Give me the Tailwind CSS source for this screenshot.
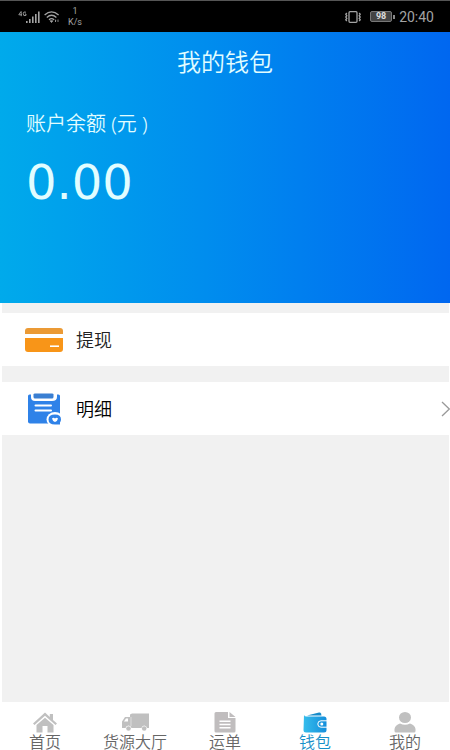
<!DOCTYPE html>
<html lang="zh-CN">
<head>
<meta charset="utf-8">
<meta name="viewport" content="width=device-width, initial-scale=1">
<title>我的钱包</title>
<script src="https://cdn.jsdelivr.net/npm/@tailwindcss/browser@4"></script>
</head>
<body class="flex min-h-screen flex-col bg-white font-['Noto_Sans','Noto_Sans_CJK_SC',sans-serif]">
  <div class="flex h-8 items-center justify-between border-t border-[#555] bg-black pr-4 pl-[18px] font-['Roboto',sans-serif] text-[#a3a3a3]">
    <div class="flex items-center gap-1">
      <svg class="h-3 w-[22px]" viewBox="0 0 22 12" fill="currentColor" aria-hidden="true">
        <path d="M3 0.5L0.8 3.8H4M3.2 0.5V5.2M8 1.2Q5.2 0 5.2 2.8Q5.2 5.6 8 4.4V3H6.8" fill="none" stroke="currentColor" stroke-width=".9"/>
        <path d="M8 10h1.6v2H8zM11 8h1.6v4H11zM14 5.500h1.600v6.500H14zM17 3h1.600v9H17zM20 .5h1.600V12H20z"/>
      </svg>
      <svg class="h-3 w-4" viewBox="0 0 16 12" fill="none" stroke="currentColor" stroke-width="1.300" aria-hidden="true">
        <path d="M.6 4Q7.500-2.300 14.600 4M2.800 6.400Q7.600 2.200 12.400 6.400M5 8.700Q7.600 6.500 10 8.700"/>
        <path d="M6.200 9.800h2.600L7.500 11.500zM11 8.500l1 1.500-1 1M14 8.500v2.500" fill="currentColor" stroke-width=".8"/>
      </svg>
      <div class="flex flex-col items-center pl-1 text-[9px] leading-[11px]"><span>1</span><span>K/s</span></div>
    </div>
    <div class="flex items-center gap-1">
      <svg class="h-3 w-[18px]" viewBox="0 0 18 12" fill="none" stroke="currentColor" stroke-width="1.300" aria-hidden="true">
        <rect x="5" y=".7" width="8" height="10.600" rx="1"/>
        <path d="M2.800 2l-1 1.300 1 1.400-1 1.300 1 1.400-1 1.300 1 1.300M15.200 2l1 1.300-1 1.400 1 1.300-1 1.400 1 1.300-1 1.300"/>
      </svg>
      <div class="flex items-center gap-px pl-1">
        <span class="flex h-[11px] w-[22px] items-center justify-center rounded-xs border border-[#777] bg-[#444] text-[9px] leading-none font-bold text-[#ddd]">98</span>
        <span class="h-1 w-0.5 bg-[#888]"></span>
      </div>
      <span class="text-sm leading-4">20:40</span>
    </div>
  </div>

  <header class="flex h-[271px] flex-col bg-linear-to-r from-[#00aaeb] to-[#0067f0] text-[#e2fdff]">
    <h1 class="pt-3 text-center text-2xl leading-9 font-[350]">我的钱包</h1>
    <section class="px-[26px] pt-7">
      <h2 class="text-xl leading-8 font-[350]">账户余额 (元 )</h2>
      <p class="pt-3.5 font-['DejaVu_Sans',sans-serif] text-5xl leading-[56px]">0.00</p>
    </section>
  </header>

  <main class="mr-px ml-0.5 flex grow flex-col gap-4 bg-[#f1f1f1] pt-[10px]">
    <button type="button" class="-mr-px -ml-0.5 flex h-[53px] items-center bg-white pl-[25px] text-lg font-[350] text-[#222]">
      <svg class="h-6 w-[38px]" viewBox="0 0 38 24" aria-hidden="true">
        <path d="M0 6V3Q0 0 3 0H35Q38 0 38 3V6z" fill="#eb9a35"/>
        <path d="M0 10H38V21Q38 24 35 24H3Q0 24 0 21z" fill="#f89518"/>
        <path d="M25 18.200h9" stroke="#fff" stroke-width="1.600"/>
      </svg>
      <span class="pl-[13px]">提现</span>
    </button>
    <button type="button" class="-mr-px -ml-0.5 flex h-[53px] items-center bg-white pl-[27px] text-lg font-[350] text-black">
      <svg class="h-8 w-9" viewBox="0 0 36 32" aria-hidden="true">
        <path d="M2.500 1.500H31.500Q33 1.500 33 3V28Q33 30.500 31 30.500H3Q1 30.500 1 28.500V3Q1 1.500 2.500 1.500z" fill="#2f82e8"/>
        <path d="M4 0V4Q4 8 8 8H25Q30 8 30 4V0z" fill="#fff"/>
        <path d="M6.500 1.500Q6.500 .5 8 .5H25Q26.500 .5 26.500 1.500V4Q26.500 5.500 25 5.500H8Q6.500 5.500 6.500 4z" fill="#3a7fd2"/>
        <path d="M8.500 12.500H24M8.500 17.500H24" stroke="#fff" stroke-width="2" stroke-linecap="round"/>
        <ellipse cx="28" cy="26.500" rx="8.500" ry="7.500" fill="#fff"/>
        <path d="M28 21.500Q34 21.500 34 26.500Q34 28 33 29.500V31.500H28Q21.500 31.500 21.500 26.500T28 21.500z" fill="#2f82e8"/>
        <path d="M25 25.500Q26.500 24 28 25.500Q29.500 24 31 25.500Q30.500 28.200 28 29Q25.500 28.200 25 25.500z" fill="#fff"/>
      </svg>
      <span class="grow pl-[13px] text-left">明细</span>
      <svg class="h-4 w-[9px]" viewBox="0 0 9 16" fill="none" stroke="#999" stroke-width="1.300" aria-hidden="true"><path d="M1 1L8.300 8L1 15"/></svg>
    </button>
  </main>

  <nav class="grid h-12 grid-cols-5 bg-white text-base leading-4 font-[350] text-[#666]">
    <a href="#home" class="flex flex-col items-center gap-px pt-[9px]">
      <svg class="h-[22px] w-6" viewBox="0 0 24 22" fill="#c0c0c0" aria-hidden="true">
        <path d="M12 1.500L16.800 6V3H20V9L24 12.500 22.500 14 12 4.800 1.500 14 0 12.500z"/>
        <path d="M12 6.800L20.500 14V21.500H14.500V15H9.500V21.500H3.500V14z"/>
      </svg>
      <span>首页</span>
    </a>
    <a href="#hall" class="flex flex-col items-center gap-px pt-[9px]">
      <svg class="h-[22px] w-[28px]" viewBox="0 0 28 22" aria-hidden="true">
        <path d="M11 2.500H28V17H26Q25.500 14.500 23.200 14.500T20.500 17H10.500Q10 14.500 7.500 14.500T4.500 17H1V10.500L4 6H9V3.500z" fill="#c0c0c0"/>
        <path d="M7 7.500H5L3 10.500H7z" fill="#fff"/>
        <path d="M10 6V15" stroke="#e5e5e5" stroke-width=".8"/>
        <circle cx="7.500" cy="17.500" r="2.300" fill="#c0c0c0"/><circle cx="23.200" cy="17.500" r="2.300" fill="#c0c0c0"/>
      </svg>
      <span>货源大厅</span>
    </a>
    <a href="#waybill" class="flex flex-col items-center gap-px pt-[9px]">
      <svg class="h-[22px] w-[22px]" viewBox="0 0 22 22" aria-hidden="true">
        <path d="M2 1H14V7H21.500V20Q21.500 21.500 20 21.500H2Q.5 21.500 .5 20V2.500Q.5 1 2 1zM15.500 1L21.500 6H15.500z" fill="#c0bdbe"/>
        <path d="M5.500 10.200H16.500M5.500 13.500H16.500M5.500 16.800H16.500" stroke="#fff" stroke-width="1.400"/>
      </svg>
      <span>运单</span>
    </a>
    <a href="#wallet" aria-current="page" class="flex flex-col items-center gap-px pt-[9px] text-[#168fc9]">
      <svg class="h-[22px] w-6" viewBox="0 0 24 22" aria-hidden="true">
        <defs><linearGradient id="w"><stop stop-color="#35bdec"/><stop offset="1" stop-color="#148edb"/></linearGradient></defs>
        <path d="M4 4.500L16 1.500Q17.500 1.200 18 2.500L18.500 4.500z" fill="#168bc9"/>
        <path d="M1 4Q1.500 5.500 3.500 5.500H21Q23.500 5.500 23.500 8V19Q23.500 21.500 21 21.500H3Q.5 21.500 .5 19z" fill="url(#w)"/>
        <path d="M24 9.800H18Q14.800 9.800 14.800 13T18 16.200H24" fill="none" stroke="#fff" stroke-width="1"/>
        <circle cx="18.800" cy="13" r="1.500" fill="#fff"/>
      </svg>
      <span>钱包</span>
    </a>
    <a href="#mine" class="flex flex-col items-center gap-px pt-[9px]">
      <svg class="h-[22px] w-[22px]" viewBox="0 0 22 22" fill="#c0c0c0" aria-hidden="true">
        <ellipse cx="11" cy="6.500" rx="6" ry="5.500"/>
        <path d="M.5 20V18Q1 14 6 12.500Q11 15 16 12.500Q21 14 21.500 18V20Q21.500 21.500 20 21.500H2Q.5 21.500 .5 20z"/>
      </svg>
      <span>我的</span>
    </a>
  </nav>
</body>
</html>
